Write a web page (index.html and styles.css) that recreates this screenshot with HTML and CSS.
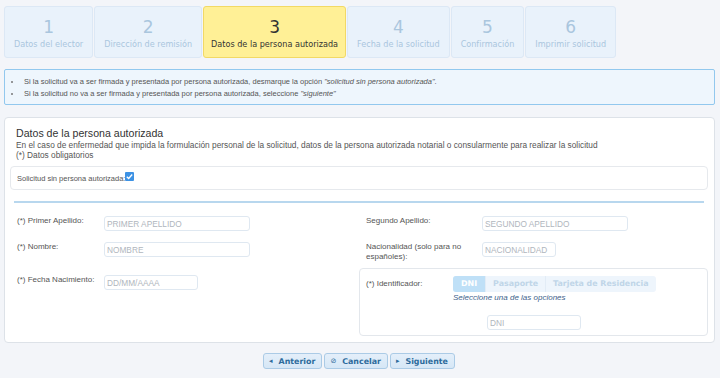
FILE: index.html
```html
<!DOCTYPE html>
<html lang="es">
<head>
    <meta charset="UTF-8">
    <title>Datos de la persona autorizada</title>
    <link rel="stylesheet" href="styles.css">
</head>
<body>
    <ol class="steps">
        <li class="step"><span class="step-num">1</span><span class="step-label">Datos del elector</span></li>
        <li class="step"><span class="step-num">2</span><span class="step-label">Dirección de remisión</span></li>
        <li class="step active"><span class="step-num">3</span><span class="step-label">Datos de la persona autorizada</span></li>
        <li class="step"><span class="step-num">4</span><span class="step-label">Fecha de la solicitud</span></li>
        <li class="step"><span class="step-num">5</span><span class="step-label">Confirmación</span></li>
        <li class="step"><span class="step-num">6</span><span class="step-label">Imprimir solicitud</span></li>
    </ol>

    <div class="info">
        <ul>
            <li>Si la solicitud va a ser firmada y presentada por persona autorizada, desmarque la opción <em>"solicitud sin persona autorizada"</em>.</li>
            <li>Si la solicitud no va a ser firmada y presentada por persona autorizada, seleccione <em>"siguiente"</em></li>
        </ul>
    </div>

    <div class="panel">
        <div class="panel-head">
            <h2>Datos de la persona autorizada</h2>
            <p>En el caso de enfermedad que impida la formulación personal de la solicitud, datos de la persona autorizada notarial o consularmente para realizar la solicitud</p>
            <p>(*) Datos obligatorios</p>
        </div>

        <div class="check-box">
            <label>Solicitud sin persona autorizada:</label><span class="check"><svg viewBox="0 0 10 10" width="9" height="9"><path d="M2 5.2 L4.1 7.2 L8 2.8" fill="none" stroke="#fff" stroke-width="1.5"/></svg></span>
        </div>

        <hr class="sep">

        <div class="form-grid">
            <div class="field">
                <label class="lbl-left">(*) Primer Apellido:</label>
                <input class="w-long" type="text" placeholder="PRIMER APELLIDO">
            </div>
            <div class="field right">
                <label class="lbl-right">Segundo Apellido:</label>
                <input class="w-long" type="text" placeholder="SEGUNDO APELLIDO">
            </div>

            <div class="field">
                <label class="lbl-left">(*) Nombre:</label>
                <input class="w-long" type="text" placeholder="NOMBRE">
            </div>
            <div class="field right">
                <label class="lbl-right">Nacionalidad (solo para no españoles):</label>
                <input class="w-short" type="text" placeholder="NACIONALIDAD">
            </div>

            <div class="field pad-top">
                <label class="lbl-left">(*) Fecha Nacimiento:</label>
                <input class="w-mid" type="text" placeholder="DD/MM/AAAA">
            </div>
            <div class="id-box">
                <label class="lbl-left">(*) Identificador:</label>
                <div class="id-right">
                    <div class="buttonset">
                        <span class="seg on">DNI</span><span class="seg">Pasaporte</span><span class="seg">Tarjeta de Residencia</span>
                    </div>
                    <p class="hint">Seleccione una de las opciones</p>
                    <input class="w-mid id-input" type="text" placeholder="DNI">
                </div>
            </div>
        </div>
    </div>

    <div class="actions">
        <button class="btn"><span class="ico">&#9666;</span>Anterior</button>
        <button class="btn"><span class="ico">&#8856;</span>Cancelar</button>
        <button class="btn"><span class="ico">&#9656;</span>Siguiente</button>
    </div>
</body>
</html>
```

FILE: styles.css
```css
*{
    padding:0;
    margin:0;
    box-sizing:border-box;
}
html,body{
    width:100%;
    height:100%;
    background-color:#f3f5f9;
    font-family:"Liberation Sans",Arial,sans-serif;
    color:#555;
    font-size:7.5px;
}
body{
    padding:6px 5px 0 4px;
}

/* pasos */
.steps{
    list-style:none;
    display:flex;
    gap:1px;
}
.step{
    display:flex;
    flex-direction:column;
    align-items:center;
    padding:9px 9px 7px;
    background:#e9f2fb;
    border:1px solid #dce8f5;
    border-radius:3px;
    font-family:"DejaVu Sans",Verdana,sans-serif;
    color:#aac6de;
}
.step-num{
    font-size:17px;
    line-height:23px;
}
.step-label{
    font-size:8.1px;
    line-height:11px;
    white-space:nowrap;
}
.step.active{
    background:#fff096;
    border-color:#f2d965;
    color:#333;
    padding:9px 7px 7px;
}

/* aviso */
.info{
    margin-top:11px;
    background:#eef6fd;
    border:1px solid #92c8ee;
    border-radius:2px;
    padding:6px 0 4px 17px;
}
.info li{
    line-height:12px;
    padding-left:2px;
}
.info li::marker{
    color:#777;
}

/* panel */
.panel{
    margin-top:12px;
    background:#fff;
    border:1px solid #dde2e8;
    border-radius:4px;
    padding:9px 6px 6px 5px;
}
.panel-head{
    padding:0 6px;
}
.panel-head h2{
    font-size:10.6px;
    font-weight:normal;
    color:#333;
    line-height:13px;
}
.panel-head p{
    font-size:8.3px;
    line-height:10px;
}
.check-box{
    margin-top:6px;
    height:24px;
    border:1px solid #e6e9ed;
    border-radius:4px;
    display:flex;
    align-items:center;
    padding-left:6px;
}
.check{
    display:inline-flex;
    width:9px;
    height:9px;
    background:#3d92e4;
    border-radius:1px;
    margin-top:-3px;
}
.sep{
    border:0;
    border-top:2px solid #b8d7ee;
    margin:11px 4px 13px 4px;
}

/* formulario */
.form-grid{
    display:grid;
    grid-template-columns:349px 349px;
    row-gap:6px;
    font-size:8px;
}
.field{
    display:flex;
    align-items:flex-start;
    min-height:20px;
    padding-left:7px;
}
.field label,.id-box label{
    line-height:10px;
}
.lbl-left{
    width:87px;
    flex:none;
}
.lbl-right{
    width:116px;
    flex:none;
    padding-right:6px;
}
.pad-top{
    padding-top:7px;
}
input{
    height:15px;
    border:1px solid #dfe8f1;
    border-radius:3px;
    font-family:"Liberation Sans",Arial,sans-serif;
    font-size:8.3px;
    padding:0 2px;
    color:#555;
    background:#fff;
}
input::placeholder{
    color:#b0b6bd;
}
.w-long{
    width:146px;
}
.w-mid{
    width:94px;
}
.w-short{
    width:74px;
}
.id-box{
    display:flex;
    align-items:flex-start;
    border:1px solid #e3e7ec;
    border-radius:4px;
    padding:7px 6px 5px 6px;
}
.id-box label{
    padding-top:3px;
}
.buttonset{
    display:flex;
    background:#eef5fc;
    border-radius:3px;
    font-family:"DejaVu Sans",Verdana,sans-serif;
    font-weight:bold;
    font-size:7.9px;
    color:#c0d5e8;
}
.seg{
    height:16px;
    line-height:16px;
    padding:0 7px;
    border-right:1px solid #e2ecf6;
}
.seg:last-child{
    border-right:0;
}
.seg.on{
    background:#bfe0f7;
    color:#fff;
    border-radius:3px 0 0 3px;
    padding:0 8px;
}
.hint{
    font-style:italic;
    color:#3e5f8b;
    line-height:11px;
}
.id-input{
    display:block;
    margin:12px 0 0 34px;
}

/* botones */
.actions{
    display:flex;
    justify-content:center;
    gap:2px;
    margin-top:10px;
    padding-right:1px;
}
.btn{
    height:16px;
    padding:0 6px 0 5px;
    border:1px solid #abcbe6;
    border-radius:3px;
    background:linear-gradient(#e4effa,#d6e7f6);
    font-family:"DejaVu Sans",Verdana,sans-serif;
    font-weight:bold;
    font-size:7.9px;
    color:#2d6b9c;
    display:flex;
    align-items:center;
}
.ico{
    font-size:7px;
    margin-right:6px;
    font-weight:normal;
}
```
